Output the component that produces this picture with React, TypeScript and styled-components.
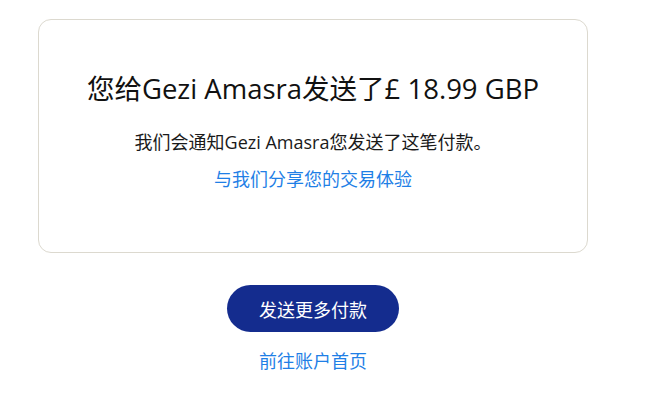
import styled, { createGlobalStyle } from "styled-components";

const GlobalStyle = createGlobalStyle`
  body {
    margin: 0;
    background: #ffffff;
    font-family: "Open Sans", "Noto Sans CJK SC", sans-serif;
    color: #1a1a1a;
  }
`;

export default function App() {
  return (
    <>
      <GlobalStyle />
      <Page>
        <Card>
          <Title>您给Gezi Amasra发送了£ 18.99 GBP</Title>
          <Message>我们会通知Gezi Amasra您发送了这笔付款。</Message>
          <FeedbackLink href="#">与我们分享您的交易体验</FeedbackLink>
        </Card>
        <Actions>
          <PrimaryButton>发送更多付款</PrimaryButton>
          <HomeLink href="#">前往账户首页</HomeLink>
        </Actions>
      </Page>
    </>
  );
}

const Page = styled.main`
  width: 550px;
  margin-left: 38px;
  padding-top: 19px;
`;

const Card = styled.section`
  box-sizing: border-box;
  height: 234px;
  border: 1px solid #dcd9cf;
  border-radius: 13px;
  display: flex;
  flex-direction: column;
  align-items: center;
  padding-top: 51px;
`;

const Title = styled.h1`
  margin: 0;
  font-size: 27.5px;
  font-weight: 400;
  line-height: 36px;
  color: #111;
  white-space: nowrap;
`;

const Message = styled.p`
  margin: 22px 0 0;
  font-size: 18px;
  line-height: 26px;
  color: #1a1a1a;
  white-space: nowrap;
`;

const FeedbackLink = styled.a`
  margin-top: 11px;
  font-size: 18px;
  line-height: 26px;
  color: #1f7fe6;
  text-decoration: none;
`;

const Actions = styled.div`
  display: flex;
  flex-direction: column;
  align-items: center;
  margin-top: 32px;
`;

const PrimaryButton = styled.button`
  width: 172px;
  height: 47px;
  border: none;
  border-radius: 24px;
  background: #142c8e;
  color: #fff;
  font-family: inherit;
  font-size: 18px;
  cursor: pointer;
`;

const HomeLink = styled.a`
  margin-top: 16px;
  font-size: 18px;
  line-height: 26px;
  color: #1f7fe6;
  text-decoration: none;
`;
